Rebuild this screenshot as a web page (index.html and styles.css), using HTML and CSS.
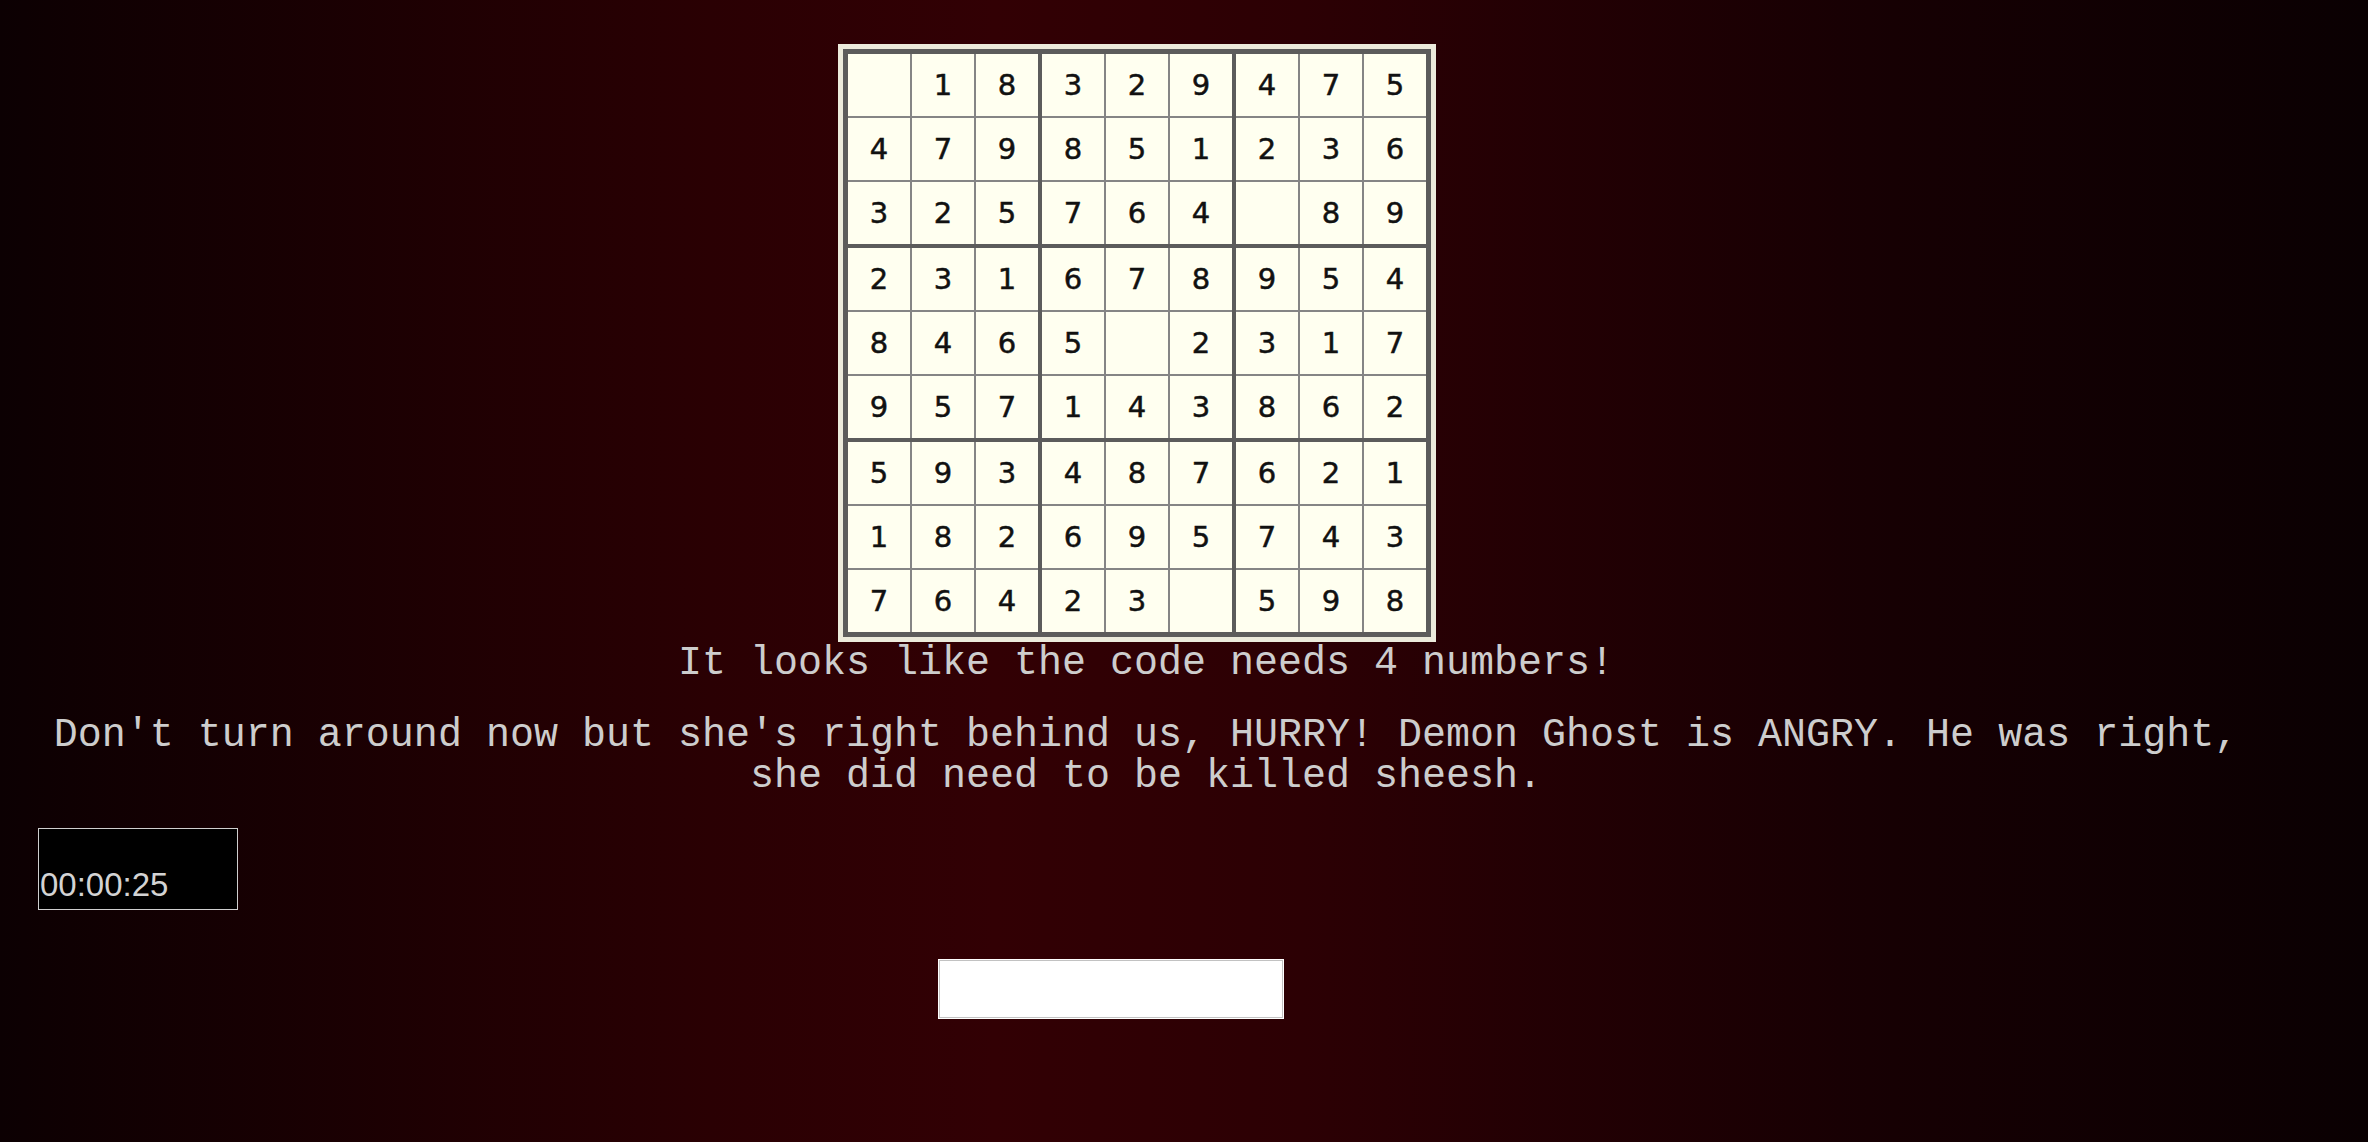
FILE: index.html
```html
<!DOCTYPE html>
<html>
<head>
<meta charset="utf-8">
<title>Sudoku</title>
<link rel="stylesheet" href="styles.css">
</head>
<body>
<div class="page">
  <div class="board-row">
    <div class="board">
      <div class="grid">
        <div class="block"><div class="cell"></div><div class="cell">1</div><div class="cell">8</div><div class="cell">4</div><div class="cell">7</div><div class="cell">9</div><div class="cell">3</div><div class="cell">2</div><div class="cell">5</div></div>
        <div class="block"><div class="cell">3</div><div class="cell">2</div><div class="cell">9</div><div class="cell">8</div><div class="cell">5</div><div class="cell">1</div><div class="cell">7</div><div class="cell">6</div><div class="cell">4</div></div>
        <div class="block"><div class="cell">4</div><div class="cell">7</div><div class="cell">5</div><div class="cell">2</div><div class="cell">3</div><div class="cell">6</div><div class="cell"></div><div class="cell">8</div><div class="cell">9</div></div>
        <div class="block"><div class="cell">2</div><div class="cell">3</div><div class="cell">1</div><div class="cell">8</div><div class="cell">4</div><div class="cell">6</div><div class="cell">9</div><div class="cell">5</div><div class="cell">7</div></div>
        <div class="block"><div class="cell">6</div><div class="cell">7</div><div class="cell">8</div><div class="cell">5</div><div class="cell"></div><div class="cell">2</div><div class="cell">1</div><div class="cell">4</div><div class="cell">3</div></div>
        <div class="block"><div class="cell">9</div><div class="cell">5</div><div class="cell">4</div><div class="cell">3</div><div class="cell">1</div><div class="cell">7</div><div class="cell">8</div><div class="cell">6</div><div class="cell">2</div></div>
        <div class="block"><div class="cell">5</div><div class="cell">9</div><div class="cell">3</div><div class="cell">1</div><div class="cell">8</div><div class="cell">2</div><div class="cell">7</div><div class="cell">6</div><div class="cell">4</div></div>
        <div class="block"><div class="cell">4</div><div class="cell">8</div><div class="cell">7</div><div class="cell">6</div><div class="cell">9</div><div class="cell">5</div><div class="cell">2</div><div class="cell">3</div><div class="cell"></div></div>
        <div class="block"><div class="cell">6</div><div class="cell">2</div><div class="cell">1</div><div class="cell">7</div><div class="cell">4</div><div class="cell">3</div><div class="cell">5</div><div class="cell">9</div><div class="cell">8</div></div>
      </div>
    </div>
  </div>
  <p class="msg hint">It looks like the code needs 4 numbers!</p>
  <p class="msg story">Don't turn around now but she's right behind us, HURRY! Demon Ghost is ANGRY. He was right, she did need to be killed sheesh.</p>
  <div class="timer">00:00:25</div>
  <div class="input-row">
    <input class="code" type="text">
  </div>
</div>
</body>
</html>
```
FILE: styles.css
```css
html, body {
  margin: 0;
  height: 100%;
}
body {
  background: linear-gradient(to right, #0c0002 0%, #2a0003 30%, #320004 42%, #2c0004 55%, #160003 80%, #0a0002 100%);
  color: #cdcdcd;
  overflow: hidden;
}
.page {
  width: 2292px;
  padding-top: 44px;
  display: flex;
  flex-direction: column;
}
.board-row {
  display: flex;
  justify-content: center;
  padding-right: 18px;
}
.board {
  background: #ecebdc;
  padding: 5px;
}
.grid {
  border: 5px solid #5c5c5c;
  background: #5c5c5c;
  display: grid;
  grid-template-columns: repeat(3, auto);
  gap: 4px;
}
.block {
  display: grid;
  grid-template-columns: repeat(3, 62px);
  grid-auto-rows: 62px;
  gap: 2px;
  background: #858585;
}
.cell {
  background: #fffff0;
  display: flex;
  align-items: center;
  justify-content: center;
  font-family: Verdana, "DejaVu Sans", sans-serif;
  font-size: 29px;
  color: #111;
  -webkit-text-stroke: 0.5px #111;
}
.msg {
  font-family: "Courier New", "Nimbus Mono PS", "FreeMono", "Liberation Mono", monospace;
  font-size: 40px;
  line-height: 41px;
  text-align: center;
  margin: 0;
  padding: 0 50px;
}
.hint {
  margin-top: 1px;
}
.story {
  margin-top: 31px;
}
.timer {
  margin: 31px 0 0 38px;
  border: 1px solid #cfcfcf;
  background: #000;
  display: flex;
  align-items: flex-end;
  padding: 0 0 5px 1px;
  box-sizing: content-box;
  height: 75px;
  width: 197px;
  font-family: "Liberation Sans", Arial, sans-serif;
  font-size: 33px;
  color: #d3d3d3;
}
.input-row {
  display: flex;
  justify-content: center;
  padding-right: 70px;
  margin-top: 49px;
}
.code {
  width: 346px;
  height: 60px;
  box-sizing: border-box;
  border: 1px solid #fff;
  box-shadow: inset 0 0 0 1px #c2c2c2;
  background: #fff;
  margin: 0;
  padding: 0;
  outline: none;
}
```
